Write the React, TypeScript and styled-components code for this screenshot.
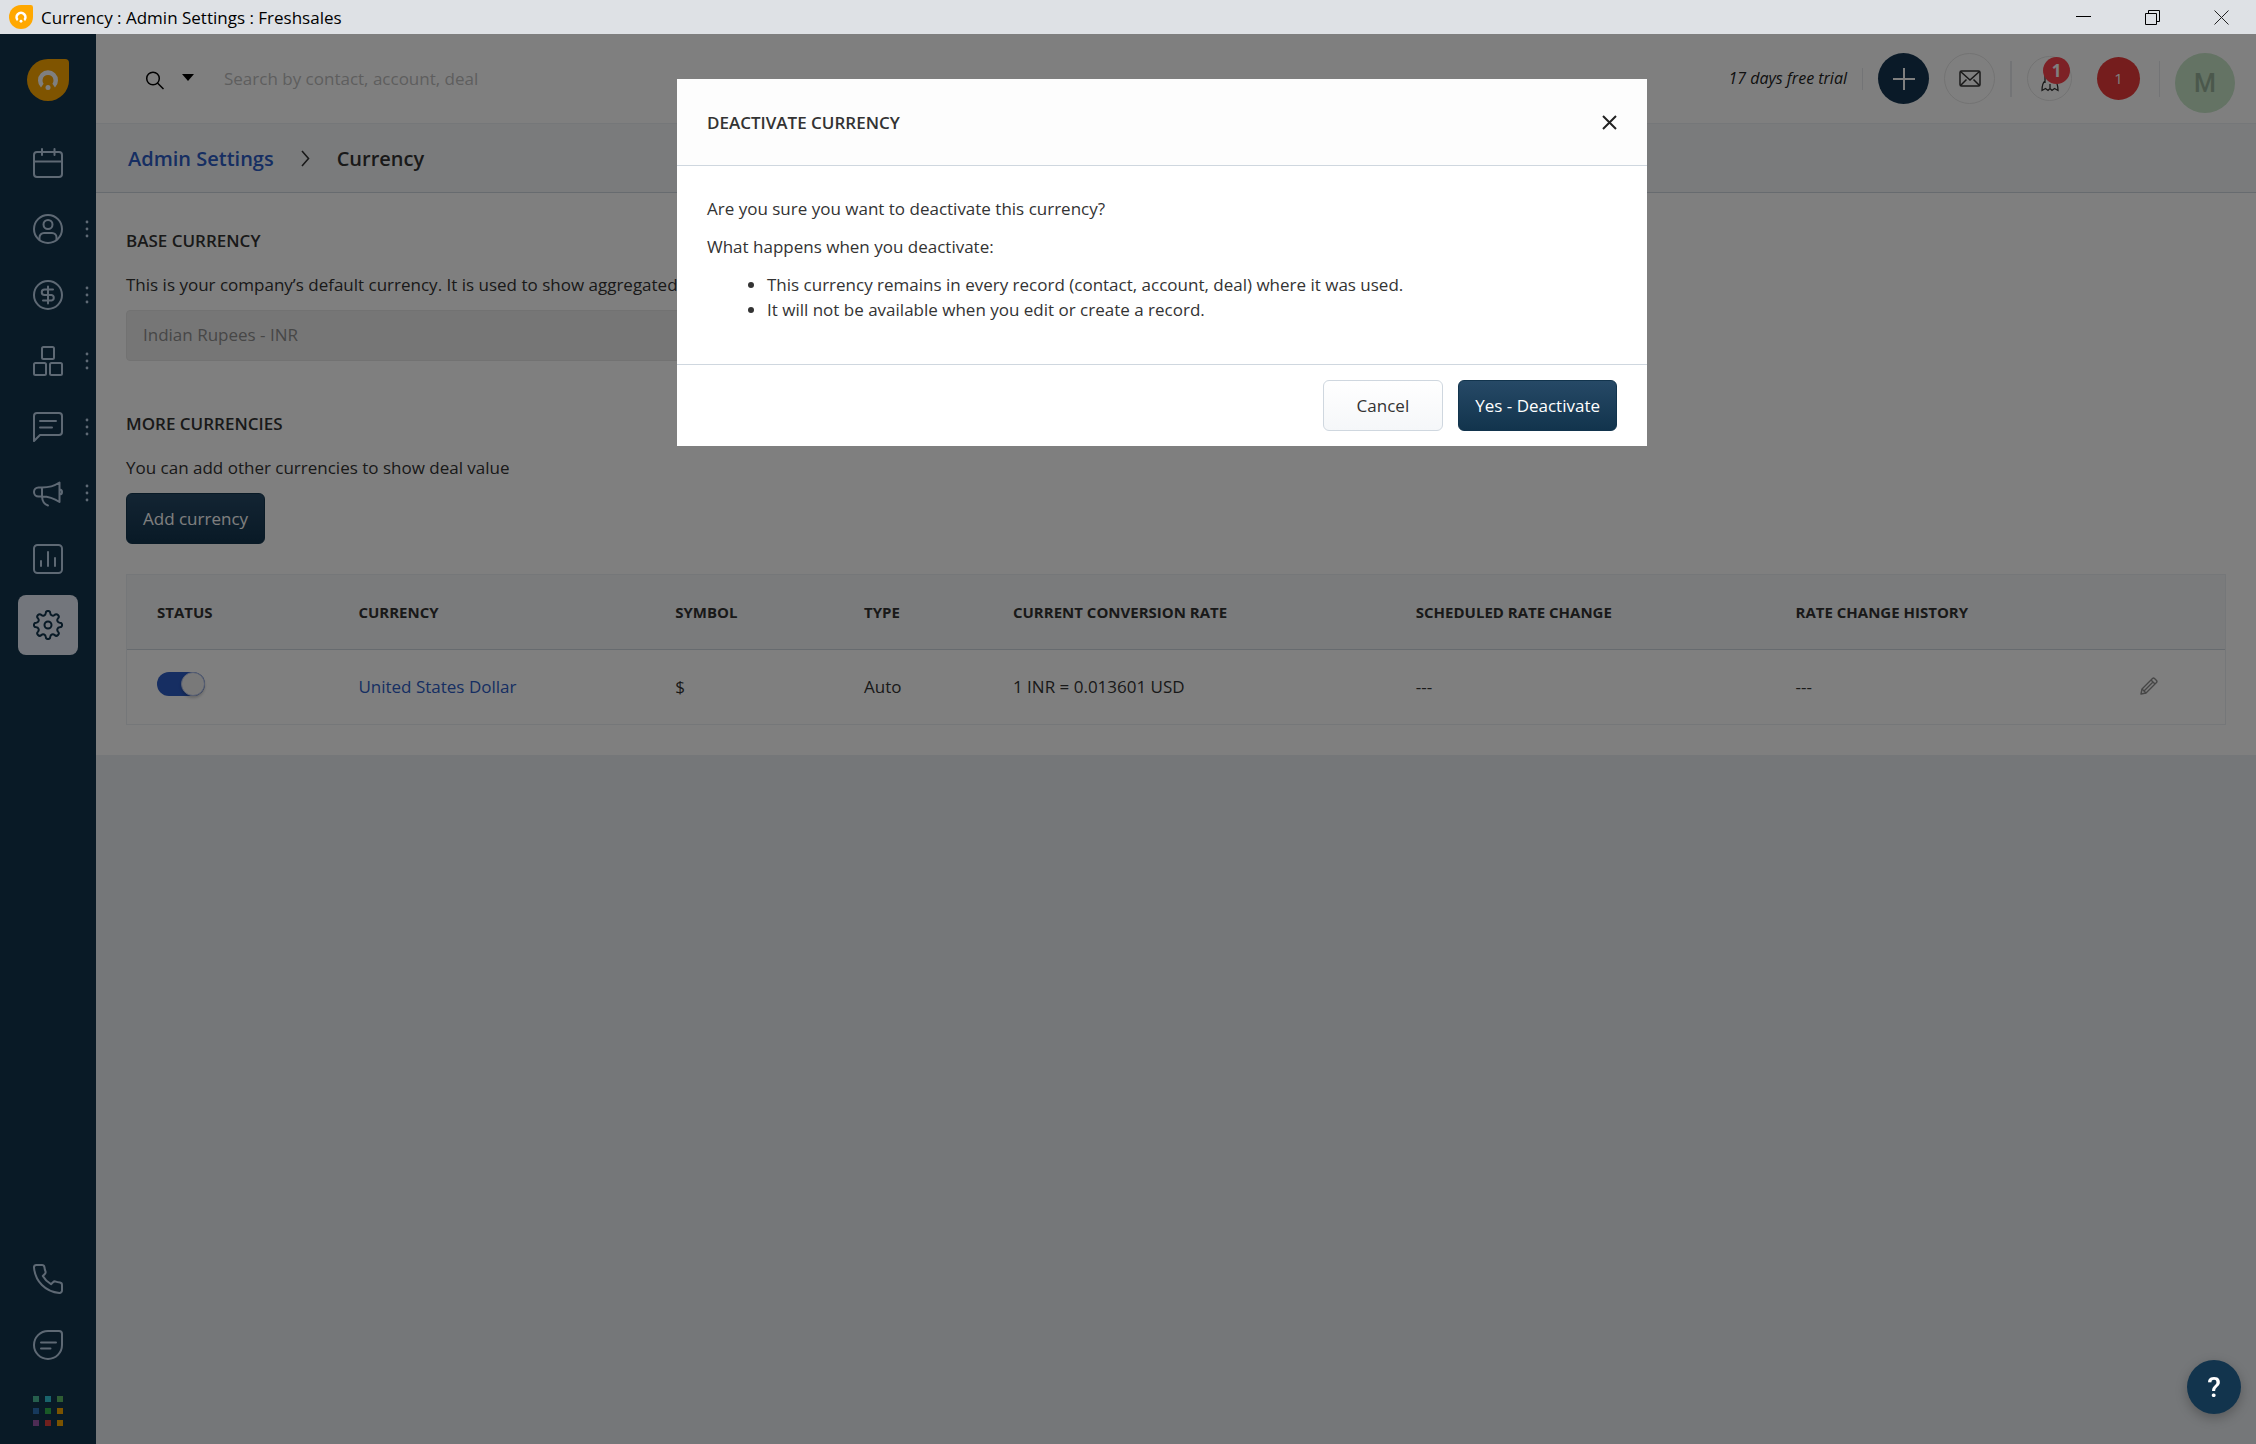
import React from "react";
import styled, { createGlobalStyle, css } from "styled-components";

const GlobalStyle = createGlobalStyle`
  *, *::before, *::after { box-sizing: border-box; }
  body {
    margin: 0;
    font-family: "Open Sans", "Noto Sans", sans-serif;
    font-size: 17px;
    line-height: 25px;
    color: #333;
    background: #ebeff3;
  }
  button, input { font: inherit; color: inherit; }
  button { padding: 0; border: 0; background: none; cursor: pointer; }
  h1, h2, p, ul { margin: 0; }
  svg { display: block; }
`;

/* ---------- window frame ---------- */

const Window = styled.div`
  display: flex;
  flex-direction: column;
  min-height: 100vh;
`;

const TitleBar = styled.header`
  display: flex;
  align-items: center;
  height: 34px;
  padding-left: 9px;
  gap: 8px;
  background: #dee1e5;
  color: #000;
`;

const TitleText = styled.span`
  flex: 1;
`;

const WindowButtons = styled.div`
  display: flex;
`;

const WindowButton = styled.button`
  display: grid;
  place-items: center;
  width: 69px;
  height: 32px;
`;

const Workspace = styled.div`
  position: relative;
  flex: 1;
  display: flex;
`;

/* ---------- sidebar ---------- */

const Sidebar = styled.nav`
  display: flex;
  flex-direction: column;
  width: 96px;
  padding: 25px 0 3px;
  background: #12344d;
  color: #bdd2e8;
`;

const LogoLink = styled.a`
  align-self: center;
  margin-bottom: 32px;
`;

const NavGroup = styled.div`
  display: flex;
  flex-direction: column;
  gap: 6px;
  &:last-child { margin-top: auto; }
`;

const NavRow = styled.div`
  display: grid;
  grid-template-columns: 18px 60px 18px;
  align-items: center;
`;

const NavButton = styled.button<{ $active?: boolean }>`
  grid-column: 2;
  display: grid;
  place-items: center;
  height: 60px;
  border-radius: 8px;
  ${(p) => p.$active && css`
    background: #e6edf8;
    color: #12344d;
  `}
`;

const MoreButton = styled.button`
  display: grid;
  place-items: center;
  height: 30px;
`;

/* ---------- top bar ---------- */

const Main = styled.main`
  flex: 1;
  min-width: 0;
`;

const TopBar = styled.div`
  display: flex;
  align-items: flex-start;
  justify-content: space-between;
  height: 90px;
  padding: 19px 21px 0 48px;
  background: #fff;
  border-bottom: 1px solid #ebeff3;
`;

const Search = styled.form`
  display: flex;
  align-items: center;
  flex: 1;
  height: 50px;
`;

const FilterButton = styled.button`
  display: flex;
  align-items: center;
  gap: 18px;
  margin-right: 30px;
  color: #000;
`;

const SearchInput = styled.input`
  width: 480px;
  height: 40px;
  padding: 0;
  border: 0;
  background: transparent;
  outline: none;
  &::placeholder { color: #bdbdbd; opacity: 1; }
`;

const TopActions = styled.div`
  display: flex;
  align-items: center;
  gap: 15px;
  height: 51px;
`;

const Trial = styled.span`
  font-size: 16px;
  font-style: italic;
  color: #222;
`;

const Divider = styled.span<{ $tall?: boolean }>`
  width: ${(p) => (p.$tall ? "2px" : "1px")};
  height: ${(p) => (p.$tall ? "36px" : "22px")};
  background: #e6e9ec;
`;

const RoundButton = styled.button<{ $size: number; $tone: "navy" | "outline" | "red" }>`
  position: relative;
  display: grid;
  place-items: center;
  width: ${(p) => p.$size}px;
  height: ${(p) => p.$size}px;
  border-radius: 50%;
  ${(p) => p.$tone === "navy" && css`background: #153550; color: #fff;`}
  ${(p) => p.$tone === "outline" && css`border: 1px solid #e6e6e6; color: #333;`}
  ${(p) => p.$tone === "red" && css`background: #ea3a3a; color: #fff; font-size: 15px;`}
`;

const AlertGroup = styled.div`
  display: flex;
  align-items: center;
  gap: 25px;
`;

const Badge = styled.span`
  position: absolute;
  top: 0;
  right: 1px;
  display: grid;
  place-items: center;
  width: 27px;
  height: 27px;
  border-radius: 50%;
  background: #fb434c;
  color: #fff;
  font-size: 17px;
  font-weight: 700;
`;

const Profile = styled.div`
  display: flex;
  align-items: flex-start;
  gap: 15px;
  margin-left: 19px;
`;

const ProfileDivider = styled(Divider)`
  height: 36px;
  margin-top: 8px;
`;

const Avatar = styled.button`
  width: 60px;
  height: 60px;
  border-radius: 50%;
  background: #c8e6c9;
  color: #97b199;
  font-family: Roboto, sans-serif;
  font-size: 25px;
  font-weight: 500;
`;

/* ---------- page ---------- */

const Breadcrumb = styled.div`
  display: flex;
  align-items: center;
  gap: 27px;
  height: 69px;
  padding: 0 32px;
  background: #f5f7f9;
  border-bottom: 1px solid #cfd7df;
  font-size: 20px;
  font-weight: 600;
`;

const BlueLink = styled.a`
  color: #2c5cc5;
  text-decoration: none;
`;

const CrumbTitle = styled.h1`
  font: inherit;
`;

const Content = styled.div`
  padding: 35px 30px 30px;
  background: #fff;
`;

const SectionTitle = styled.h2`
  font-size: 17px;
  font-weight: 600;
  line-height: 25px;
  margin-bottom: 19px;
`;

const Hint = styled.label`
  display: block;
  margin-bottom: 13px;
`;

const HintText = styled.p`
  margin-bottom: 13px;
`;

const DisabledInput = styled.input`
  display: block;
  width: 50%;
  height: 51px;
  padding: 0 16px 2px;
  margin-bottom: 50px;
  border: 1px solid #e4e4e4;
  border-radius: 4px;
  background: #ededed;
  color: #8f8f8f;
`;

const Button = styled.button<{ $primary?: boolean }>`
  height: 51px;
  border-radius: 6px;
  ${(p) => p.$primary
    ? css`
        padding: 0 16px;
        border: 1px solid #12344d;
        background: linear-gradient(#264966, #12344d);
        color: #fff;
      `
    : css`
        padding: 0 33px;
        border: 1px solid #cfd7df;
        background: linear-gradient(#fff, #f5f7f9);
      `}
`;

const RateTable = styled.table`
  width: 100%;
  margin-top: 30px;
  table-layout: fixed;
  border-collapse: separate;
  border-spacing: 0;
  border: 1px solid #ebeff3;
  text-align: left;

  th {
    height: 75px;
    padding: 0 30px;
    background: #f5f7f9;
    border-bottom: 1px solid #cfd7df;
    font-size: 15px;
    font-weight: 700;
    white-space: nowrap;
  }
  td {
    height: 74px;
    padding: 0 30px 2px;
  }
`;

const EditButton = styled.button`
  display: block;
  color: #8c8c8c;
`;

const Toggle = styled.input`
  display: block;
  appearance: none;
  position: relative;
  width: 48px;
  height: 24px;
  margin: 0 0 4px;
  border-radius: 12px;
  background: #2c5cc5;
  &::after {
    content: "";
    position: absolute;
    top: 0;
    right: 0;
    width: 24px;
    height: 24px;
    border: 1px solid #b4c2e6;
    border-radius: 50%;
    background: #f2f2f2;
    box-shadow: 0 2px 3px rgba(0, 0, 0, 0.2);
  }
`;

/* ---------- dialog ---------- */

const Overlay = styled.div`
  position: absolute;
  inset: 0;
  display: flex;
  justify-content: center;
  align-items: flex-start;
  padding: 45px 0 0 68px;
  background: rgba(0, 0, 0, 0.5);
`;

const Dialog = styled.section`
  width: 970px;
  background: #fff;
`;

const DialogHeader = styled.div`
  display: flex;
  align-items: center;
  justify-content: space-between;
  height: 87px;
  padding: 0 30px;
  background: #fdfdfd;
  border-bottom: 1px solid #cfd7df;
`;

const DialogTitle = styled.h2`
  font-size: 17px;
  font-weight: 600;
`;

const DialogBody = styled.div`
  display: flex;
  flex-direction: column;
  gap: 13px;
  padding: 30px 30px 42px;
`;

const Effects = styled.ul`
  padding-left: 60px;
`;

const DialogFooter = styled.div`
  display: flex;
  justify-content: flex-end;
  gap: 15px;
  padding: 15px 30px;
  border-top: 1px solid #cfd7df;
`;

const HelpButton = styled.button`
  position: fixed;
  right: 15px;
  bottom: 30px;
  width: 54px;
  height: 54px;
  border-radius: 50%;
  background: #12344d;
  box-shadow: 0 4px 12px rgba(0, 0, 0, 0.25);
  color: #fff;
  font-family: Roboto, sans-serif;
  font-size: 28px;
  font-weight: 500;
`;

/* ---------- icons ---------- */

const Logo = ({ size }: { size: number }) => (
  <svg width={size} height={size} viewBox="0 0 42 42">
    <path d="M21 0h17a4 4 0 0 1 4 4v17A21 21 0 1 1 21 0z" fill="#ffa800" />
    <path d="M14 28.500a10 10 0 1 1 14 0l-2.600-3.800a5.500 5.500 0 1 0-8.800 0z" fill="#fff" />
    <circle cx="21" cy="28.500" r="2.500" fill="#fff" />
  </svg>
);

const Line = ({ children }: { children: React.ReactNode }) => (
  <svg width="30" height="30" viewBox="0 0 30 30" fill="none" stroke="currentColor" strokeWidth="2" strokeLinecap="round" strokeLinejoin="round">
    {children}
  </svg>
);

const CalendarIcon = () => (
  <Line>
    <rect x="1" y="4" width="28" height="25" rx="3" />
    <path d="M1 13.500h28M9 1v6M21.500 1v6" />
  </Line>
);
const ContactIcon = () => (
  <Line>
    <circle cx="15" cy="15" r="14" />
    <circle cx="15" cy="10.500" r="4.500" />
    <path d="M6.500 26v-2.500a4.500 4.500 0 0 1 4.500-4.500h8a4.500 4.500 0 0 1 4.500 4.500v2.500" />
  </Line>
);
const DealIcon = () => (
  <Line>
    <circle cx="15" cy="15" r="14" />
    <path d="M20 9.500h-8.500a2.700 2.700 0 0 0 0 5.500h7a2.800 2.800 0 0 1 0 5.500h-8.500M15 6.500v17" />
  </Line>
);
const BoxesIcon = () => (
  <Line>
    <rect x="9" y="1" width="12" height="12" rx="1.500" />
    <rect x="1" y="17" width="12" height="12" rx="1.500" />
    <rect x="17" y="17" width="12" height="12" rx="1.500" />
  </Line>
);
const ChatIcon = () => (
  <Line>
    <path d="M1 29V4a3 3 0 0 1 3-3h22a3 3 0 0 1 3 3v16a3 3 0 0 1-3 3H7z" />
    <path d="M7 9h16M7 15.500h12" />
  </Line>
);
const MegaphoneIcon = () => (
  <Line>
    <path d="M9 9.500H5.500a4.500 4.500 0 0 0 0 9H9zM9 9.500c7 0 13-2 17.500-5v19.500c-4.500-3-10.500-5.500-17.500-5.500M26.500 11.500a2.500 2.500 0 0 1 0 5M9 18.500c.3 4.500 2.500 8 6 9" />
  </Line>
);
const ReportIcon = () => (
  <Line>
    <rect x="1" y="1" width="28" height="28" rx="3.500" />
    <path d="M8 17v5M15 8v14M22 14v8" />
  </Line>
);
const GearIcon = () => (
  <Line>
    <path d="M12.700 3.200a2.300 2.300 0 0 1 4.600 0c.1 2.200 2.600 3.200 4.200 1.800a2.300 2.300 0 0 1 3.500 3.400c-1.500 1.600-.5 4.200 1.800 4.300a2.300 2.300 0 0 1 0 4.600c-2.300.1-3.300 2.700-1.800 4.300a2.300 2.300 0 0 1-3.400 3.400c-1.600-1.500-4.200-.5-4.300 1.800a2.300 2.300 0 0 1-4.600 0c-.1-2.300-2.700-3.300-4.300-1.800a2.300 2.300 0 0 1-3.400-3.400c1.500-1.600.5-4.200-1.800-4.300a2.300 2.300 0 0 1 0-4.600c2.300-.1 3.300-2.700 1.800-4.300a2.300 2.300 0 0 1 3.400-3.400c1.600 1.400 4.200.4 4.300-1.800z" />
    <circle cx="15" cy="15" r="3.500" />
  </Line>
);
const PhoneIcon = () => (
  <Line>
    <path d="M3 1h6a2.500 2.500 0 0 1 2.400 2c.2 1.500.5 3 1 4.200a2.500 2.500 0 0 1-.6 2.800l-2 2c2 3.500 4.700 6.200 8.200 8.200l2-2a2.500 2.500 0 0 1 2.800-.6c1.200.5 2.700.8 4.200 1a2.500 2.500 0 0 1 2 2.400v5.500a2.500 2.500 0 0 1-2.700 2.500C12.500 27.800 2.200 17.500 1 3.500A2.300 2.300 0 0 1 3 1z" />
  </Line>
);
const MessageIcon = () => (
  <Line>
    <path d="M15 1h11a3 3 0 0 1 3 3v11A14 14 0 1 1 15 1z" />
    <path d="M8 12.500h15M8 18.500h9.500" />
  </Line>
);
const appColors = ["#4dbe9a", "#33c7d6", "#5fba66", "#2c73b8", "#33b54f", "#f7a600", "#9b59a8", "#e0403a", "#f7a600"];
const AppsIcon = () => (
  <svg width="30" height="30" viewBox="0 0 30 30">
    {appColors.map((c, i) => (
      <rect key={i} x={(i % 3) * 12} y={Math.floor(i / 3) * 12} width="6" height="6" fill={c} />
    ))}
  </svg>
);
const DotsIcon = () => (
  <svg width="4" height="18" viewBox="0 0 4 18" fill="currentColor">
    <circle cx="2" cy="2" r="1.400" />
    <circle cx="2" cy="9" r="1.400" />
    <circle cx="2" cy="16" r="1.400" />
  </svg>
);
const PencilIcon = () => (
  <svg width="18" height="18" viewBox="0 0 18 18" fill="none" stroke="currentColor" strokeWidth="1.400" strokeLinejoin="round">
    <path d="M1 17l1-5L12.500 1.500a1.500 1.500 0 0 1 2 0l2 2a1.500 1.500 0 0 1 0 2L6 16z" />
    <path d="M11 3l4 4M2 12l4 4M4 14l8.500-8.500" />
  </svg>
);

const navItems = [
  { label: "Calendar", icon: <CalendarIcon /> },
  { label: "Contacts", icon: <ContactIcon />, more: true },
  { label: "Deals", icon: <DealIcon />, more: true },
  { label: "Products", icon: <BoxesIcon />, more: true },
  { label: "Conversations", icon: <ChatIcon />, more: true },
  { label: "Campaigns", icon: <MegaphoneIcon />, more: true },
  { label: "Reports", icon: <ReportIcon /> },
  { label: "Admin Settings", icon: <GearIcon />, active: true },
];

const footerItems = [
  { label: "Phone", icon: <PhoneIcon /> },
  { label: "Chat", icon: <MessageIcon /> },
  { label: "Apps", icon: <AppsIcon /> },
];

const columns = [
  { title: "Status", width: "9.6%" },
  { title: "Currency", width: "15.1%" },
  { title: "Symbol", width: "9%" },
  { title: "Type", width: "7.1%" },
  { title: "Current conversion rate", width: "19.2%" },
  { title: "Scheduled rate change", width: "18.1%" },
  { title: "Rate change history", width: "16.4%" },
];

export default function App() {
  return (
    <Window>
      <GlobalStyle />
      <TitleBar>
        <Logo size={24} />
        <TitleText>Currency : Admin Settings : Freshsales</TitleText>
        <WindowButtons>
          <WindowButton aria-label="Minimize">
            <svg width="15" height="15" stroke="#000"><path d="M0 6.500h15" /></svg>
          </WindowButton>
          <WindowButton aria-label="Restore">
            <svg width="15" height="15" stroke="#000" fill="none"><path d="M.5 3.500h11v11H.5zM3.500 3.500v-3h11v11h-3" /></svg>
          </WindowButton>
          <WindowButton aria-label="Close">
            <svg width="15" height="15" stroke="#222"><path d="M.5.5l14 14M14.500.5l-14 14" /></svg>
          </WindowButton>
        </WindowButtons>
      </TitleBar>

      <Workspace>
        <Sidebar>
          <LogoLink href="#" aria-label="Home"><Logo size={42} /></LogoLink>
          <NavGroup>
            {navItems.map((item) => (
              <NavRow key={item.label}>
                <NavButton $active={item.active} aria-label={item.label}>{item.icon}</NavButton>
                {item.more && <MoreButton aria-label={`More ${item.label}`}><DotsIcon /></MoreButton>}
              </NavRow>
            ))}
          </NavGroup>
          <NavGroup>
            {footerItems.map((item) => (
              <NavRow key={item.label}>
                <NavButton aria-label={item.label}>{item.icon}</NavButton>
              </NavRow>
            ))}
          </NavGroup>
        </Sidebar>

        <Main>
          <TopBar>
            <Search>
              <FilterButton type="button" aria-label="Search filter">
                <svg width="20" height="26" viewBox="0 0 20 26" fill="none" stroke="currentColor" strokeWidth="1.500">
                  <circle cx="9" cy="13.500" r="6.300" /><path d="M13.500 18l6 6" />
                </svg>
                <svg width="12" height="8" viewBox="0 0 12 8" fill="currentColor"><path d="M0 0h12L6 7z" /></svg>
              </FilterButton>
              <SearchInput aria-label="Search" placeholder="Search by contact, account, deal" />
            </Search>
            <TopActions>
              <Trial>17 days free trial</Trial>
              <Divider />
              <RoundButton $size={51} $tone="navy" aria-label="Add">
                <svg width="24" height="24" stroke="currentColor" strokeWidth="2"><path d="M12 1v22M1 12h22" /></svg>
              </RoundButton>
              <RoundButton $size={51} $tone="outline" aria-label="Email">
                <svg width="22" height="17" fill="none" stroke="currentColor" strokeWidth="1.500">
                  <rect x="1" y="1" width="20" height="15" rx="1.500" /><path d="M1.500 1.500L11 10l9.500-8.500M1.500 15.500l6-6M20.500 15.500l-6-6" />
                </svg>
              </RoundButton>
              <Divider $tall />
              <AlertGroup>
                <RoundButton $size={45} $tone="outline" aria-label="Notifications">
                  <svg width="18" height="26" viewBox="0 0 18 26" fill="none" stroke="currentColor" strokeWidth="1.300">
                    <path d="M4 17V9l5-6 5 6v8M4 15c-2 1.500-3 4-3 9.500l3.500-2 2.500 2 2-2 2 2 2.500-2 3.500 2c0-5.500-1-8-3-9.500M9 18v5" />
                  </svg>
                  <Badge>1</Badge>
                </RoundButton>
                <RoundButton $size={43} $tone="red">1</RoundButton>
              </AlertGroup>
            </TopActions>
            <Profile>
              <ProfileDivider />
              <Avatar aria-label="Profile">M</Avatar>
            </Profile>
          </TopBar>

          <Breadcrumb>
            <BlueLink href="#">Admin Settings</BlueLink>
            <svg width="9" height="17" viewBox="0 0 9 17" fill="none" stroke="#333" strokeWidth="1.600"><path d="M1 1l6.500 7.500L1 16" /></svg>
            <CrumbTitle>Currency</CrumbTitle>
          </Breadcrumb>

          <Content>
            <SectionTitle>BASE CURRENCY</SectionTitle>
            <Hint htmlFor="base">This is your company’s default currency. It is used to show aggregated deal value.</Hint>
            <DisabledInput id="base" disabled defaultValue="Indian Rupees - INR" />

            <SectionTitle>MORE CURRENCIES</SectionTitle>
            <HintText>You can add other currencies to show deal value</HintText>
            <Button $primary>Add currency</Button>

            <RateTable>
              <colgroup>
                {columns.map((c) => <col key={c.title} style={{ width: c.width }} />)}
                <col />
              </colgroup>
              <thead>
                <tr>
                  {columns.map((c) => <th key={c.title} scope="col">{c.title.toUpperCase()}</th>)}
                  <th aria-label="Actions" />
                </tr>
              </thead>
              <tbody>
                <tr>
                  <td><Toggle type="checkbox" defaultChecked aria-label="United States Dollar active" /></td>
                  <td><BlueLink href="#">United States Dollar</BlueLink></td>
                  <td>$</td>
                  <td>Auto</td>
                  <td>1 INR = 0.013601 USD</td>
                  <td>---</td>
                  <td>---</td>
                  <td><EditButton aria-label="Edit"><PencilIcon /></EditButton></td>
                </tr>
              </tbody>
            </RateTable>
          </Content>
        </Main>

        <Overlay>
          <Dialog role="dialog" aria-modal="true" aria-labelledby="dialog-title">
            <DialogHeader>
              <DialogTitle id="dialog-title">DEACTIVATE CURRENCY</DialogTitle>
              <button aria-label="Close dialog">
                <svg width="15" height="15" stroke="#222" strokeWidth="2"><path d="M1 1l13 13M14 1L1 14" /></svg>
              </button>
            </DialogHeader>
            <DialogBody>
              <p>Are you sure you want to deactivate this currency?</p>
              <p>What happens when you deactivate:</p>
              <Effects>
                <li>This currency remains in every record (contact, account, deal) where it was used.</li>
                <li>It will not be available when you edit or create a record.</li>
              </Effects>
            </DialogBody>
            <DialogFooter>
              <Button>Cancel</Button>
              <Button $primary>Yes - Deactivate</Button>
            </DialogFooter>
          </Dialog>
        </Overlay>
      </Workspace>
      <HelpButton aria-label="Help">?</HelpButton>
    </Window>
  );
}
